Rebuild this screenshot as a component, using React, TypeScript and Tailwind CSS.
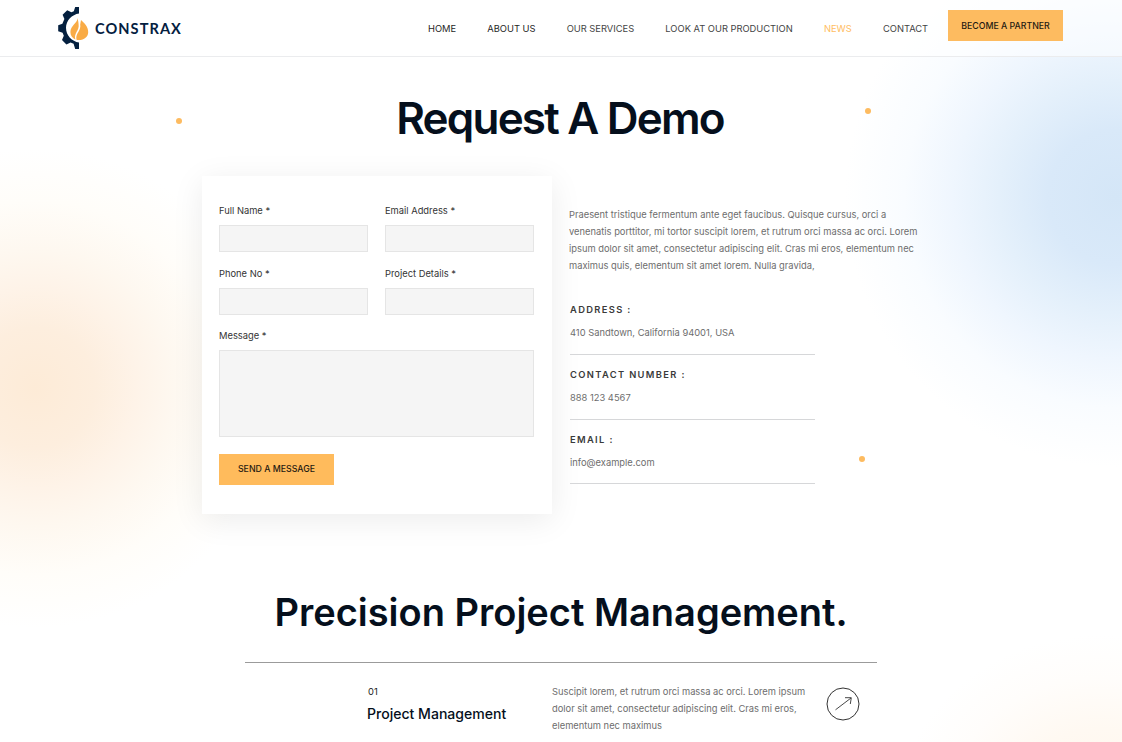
import React from "react";

const NAV = [
  { label: "HOME", className: "text-[#1f1f1f]" },
  { label: "ABOUT US", className: "text-[#1f1f1f]" },
  { label: "OUR SERVICES", className: "text-[#444444]" },
  { label: "LOOK AT OUR PRODUCTION", className: "text-[#444444]" },
  { label: "NEWS", className: "text-[#ffbd61]" },
  { label: "CONTACT", className: "text-[#444444]" },
];

const CONTACTS = [
  { title: "ADDRESS :", value: "410 Sandtown, California 94001, USA" },
  { title: "CONTACT NUMBER :", value: "888 123 4567" },
  { title: "EMAIL :", value: "info@example.com" },
];

function Logo() {
  return (
    <a href="#" className="flex items-center">
      <svg width="32" height="42" viewBox="0 0 32 42">
        <path
          d="M21 0H17.2L15.8 4.2L13.4 5.2L9.2 3.2L4.6 7.8L6.4 12L5.2 14.8L4.4 16.8L0.2 18.2V24.2L4.6 25.8L5.8 28.8L4 33L8.4 37.6L12.6 35.6L15.6 36.8L17.2 42H21V35.6C14 34.4 8 28.6 8 20.8C8 13.4 14 7.4 21 6.4Z"
          fill="#04203f"
        />
        <path
          d="M19.5 11C20 15.4 12.4 18.6 12.4 25C12.4 28.4 14.2 31 17.4 32.6C15.6 26.2 21.6 23.6 20.6 17.6C20.5 15.2 20 12.8 19.5 11Z"
          fill="#f9ab45"
        />
        <path
          d="M23 13C26.4 16 30.4 20 30.2 25.2C30 29.8 26.4 33 20.8 33C19.6 33 18.6 32.8 18.4 32.4C17.4 26.6 23.4 23.4 22.2 17.6L23 13Z"
          fill="#f9ab45"
        />
      </svg>
      <span className="ml-[5px] pt-px font-[Lato] text-[14.6px] leading-[20px] font-bold tracking-[1.05px] text-[#04203f]">
        CONSTRAX
      </span>
    </a>
  );
}

function Field({ label, tall = false }: { label: string; tall?: boolean }) {
  return (
    <label className="flex flex-col">
      <span className="text-[9.35px] leading-[16px] text-[#333333]">{label}</span>
      {tall ? (
        <textarea className="mt-[6px] block h-[87px] w-full resize-none border border-[#e5e5e5] bg-[#f5f5f5]" />
      ) : (
        <input className="mt-[6px] block h-[27px] w-full border border-[#e5e5e5] bg-[#f5f5f5]" />
      )}
    </label>
  );
}

function Backdrop() {
  return (
    <div className="pointer-events-none absolute inset-0 overflow-hidden">
      <div className="absolute top-[148px] -left-[205px] h-[480px] w-[480px] rounded-full bg-[radial-gradient(closest-side,#fdebd7_0%,#fdeede_25%,#fef3e8_42%,#fef8f0_58%,#fffdf9_78%,#ffffff_100%)]" />
      <div className="absolute -top-[73px] left-[845px] h-[540px] w-[540px] rounded-full bg-[radial-gradient(closest-side,#d4e6f7_0%,#d9e9f9_25%,#e4f0fb_43%,#eff6fe_60%,#f9fcff_78%,#ffffff_100%)]" />
      <div className="absolute top-[635px] left-[900px] h-[340px] w-[400px] rounded-full bg-[radial-gradient(closest-side,#fff5ea_0%,#fff9f2_45%,#fffdfb_75%,#ffffff_100%)]" />
      <i className="absolute top-[118px] left-[176px] size-[6px] rounded-full bg-[#fdbb60]" />
      <i className="absolute top-[108px] left-[865px] size-[6px] rounded-full bg-[#fdbb60]" />
      <i className="absolute top-[456px] left-[859px] size-[6px] rounded-full bg-[#fdbb60]" />
    </div>
  );
}

export default function App() {
  return (
    <div className="relative h-[742px] w-[1122px] overflow-hidden bg-white font-[Inter,sans-serif]">
      <Backdrop />
      <div className="relative flex flex-col">
        <header className="flex h-[57px] items-start border-b border-[#ebecee] bg-white/50 pl-[58px]">
          <div className="w-[370px] pt-[7px]">
            <Logo />
          </div>
          <nav className="flex gap-[31.2px] pt-[20.5px] text-[9.33px] leading-[16px] whitespace-nowrap">
            {NAV.map((n) => (
              <a key={n.label} href="#" className={n.className}>
                {n.label}
              </a>
            ))}
          </nav>
          <button className="mt-[10.4px] mr-[59px] ml-auto h-[31px] w-[115px] bg-[#fdbb60] text-[8.77px] leading-[16px] font-medium whitespace-nowrap text-[#1f1a12]">
            BECOME A PARTNER
          </button>
        </header>

        <h1 className="mt-[33px] pr-[2px] text-center text-[44px] leading-[56px] font-semibold tracking-[-1.8px] text-[#050f1c]">
          Request A Demo
        </h1>

        <section className="mt-[30px] ml-[202px] flex">
          <form className="flex h-[338px] w-[350px] flex-col bg-white pt-[27px] pr-[18px] pl-[17px] shadow-[0_6px_30px_rgba(0,0,0,0.08)]">
            <div className="grid grid-cols-2 gap-x-[17px] gap-y-[14px]">
              <Field label="Full Name *" />
              <Field label="Email Address *" />
              <Field label="Phone No *" />
              <Field label="Project Details *" />
            </div>
            <div className="mt-[13px]">
              <Field label="Message *" tall />
            </div>
            <button
              type="button"
              className="mt-[17px] h-[31px] w-[115px] bg-[#ffbb5c] text-[8.77px] font-medium whitespace-nowrap text-[#1f1a12]"
            >
              SEND A MESSAGE
            </button>
          </form>

          <div className="ml-[17px] flex w-[360px] flex-col pt-[30px]">
            <p className="text-[9.35px] leading-[17px] whitespace-nowrap text-[#6d6d6d]">
              Praesent tristique fermentum ante eget faucibus. Quisque cursus, orci a
              <br />
              venenatis porttitor, mi tortor suscipit lorem, et rutrum orci massa ac orci. Lorem
              <br />
              ipsum dolor sit amet, consectetur adipiscing elit. Cras mi eros, elementum nec
              <br />
              maximus quis, elementum sit amet lorem. Nulla gravida,
            </p>
            <dl className="mt-[16px] ml-[1px] w-[245px]">
              {CONTACTS.map((c) => (
                <div
                  key={c.title}
                  className="h-[65px] border-b border-[#d6d7d9] pt-[12px] last:h-[64px]"
                >
                  <dt className="text-[9.35px] leading-[16px] font-semibold tracking-[1.35px] text-[#3a3a3a]">
                    {c.title}
                  </dt>
                  <dd className="mt-[7px] text-[9.35px] leading-[16px] text-[#6d6d6d]">{c.value}</dd>
                </div>
              ))}
            </dl>
          </div>
        </section>

        <h2 className="mt-[72px] text-center text-[38px] leading-[52px] font-semibold text-[#050f1c]">
          Precision Project Management.
        </h2>

        <section className="mt-[24px] ml-[245px] flex w-[632px] border-t border-[#9b9b9b]">
          <div className="ml-[122px] w-[185px] pt-[21px]">
            <div className="ml-[1px] text-[9.35px] leading-[16px] text-[#222222]">01</div>
            <h3 className="mt-[4px] text-[14.05px] leading-[20px] font-medium text-[#050f1c]">
              Project Management
            </h3>
          </div>
          <p className="w-[274px] pt-[20px] text-[9.33px] leading-[17px] whitespace-nowrap text-[#6d6d6d]">
            Suscipit lorem, et rutrum orci massa ac orci. Lorem ipsum
            <br />
            dolor sit amet, consectetur adipiscing elit. Cras mi eros,
            <br />
            elementum nec maximus
          </p>
          <svg width="34" height="34" viewBox="0 0 34 34" fill="none" stroke="#333333" className="mt-[24px]">
            <circle cx="17" cy="17" r="16" />
            <path d="M9.5 22.8L25 11M19 10.7H25.3L24.3 17" strokeWidth="0.9" />
          </svg>
        </section>
      </div>
    </div>
  );
}
